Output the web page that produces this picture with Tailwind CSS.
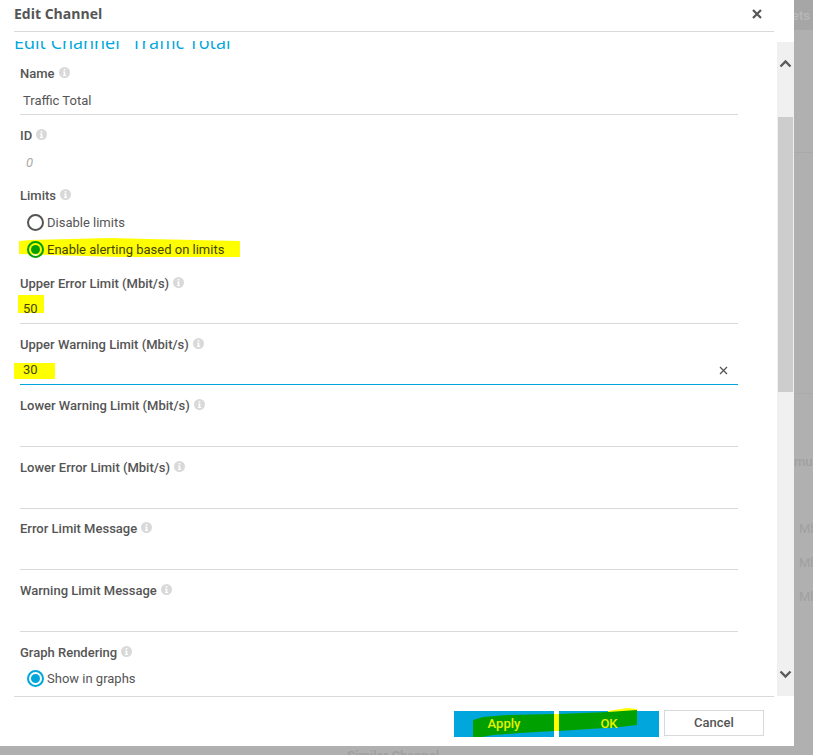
<!DOCTYPE html>
<html lang="en">
<head>
<meta charset="UTF-8">
<title>Edit Channel</title>
<script src="https://cdn.jsdelivr.net/npm/@tailwindcss/browser@4"></script>
</head>
<body class="bg-[#b0b0b0] font-['Roboto',sans-serif]">
<div class="relative w-[813px] h-[755px] overflow-hidden">
  <!-- page behind the dialog -->
  <div class="absolute left-[794px] top-0 w-[19px] h-[30px] bg-[#a6a6a6] text-[13px] font-medium text-[#b8b8b8] leading-[32px] whitespace-nowrap overflow-hidden indent-[-2px]">ets</div>
  <div class="absolute left-[794px] top-[152px] w-[19px] h-px bg-[#a9a9a9]"></div>
  <div class="absolute left-[794px] top-[393px] w-[19px] h-px bg-[#aaaaaa]"></div>
  <div class="absolute left-[794px] top-[452px] text-[13px] font-medium text-[#a0a0a0] whitespace-nowrap">mur</div>
  <div class="absolute left-[799px] top-[519px] text-[13px] text-[#a0a0a0] whitespace-nowrap">Mb</div>
  <div class="absolute left-[799px] top-[553px] text-[13px] text-[#a0a0a0] whitespace-nowrap">Mb</div>
  <div class="absolute left-[799px] top-[587px] text-[13px] text-[#a0a0a0] whitespace-nowrap">Mb</div>
  <div class="absolute left-[347px] top-[746px] text-[13px] font-bold text-[#a0a0a0] whitespace-nowrap">Similar Channel</div>

  <!-- dialog -->
  <div class="relative w-[794px] h-[746px] bg-white flex flex-col">
    <div class="mx-[14px] w-[760px] h-[32px] pb-[4px] border-b border-[#d9d9d9] flex items-center justify-between pr-[11px] shrink-0">
      <span class="text-[14px] font-bold text-[#555555] font-['Open_Sans',sans-serif]">Edit Channel</span>
      <svg class="w-[12px] h-[12px]" viewBox="0 0 12 12"><path d="M2 2l8 8M10 2l-8 8" stroke="#555555" stroke-width="2.2" fill="none"/></svg>
    </div>

    <div class="flex h-[664px] shrink-0">
      <div class="w-[777px] h-[664px] overflow-hidden">
        <div class="mt-[9px] h-[8px] overflow-hidden pl-[14px]">
          <div class="-mt-[11px] text-[18px] leading-[24px] text-[#00a6dc] font-['Open_Sans',sans-serif] whitespace-nowrap">Edit Channel "Traffic Total"</div>
        </div>
        <div class="pl-[20px] w-[738px] text-[13px] text-[#555555]">
          <div class="mt-[16px] h-[18px] flex items-center gap-[4px] font-medium">Name<svg class="w-[11px] h-[11px] -mt-[4px]" viewBox="0 0 16 16"><circle cx="8" cy="8" r="8" fill="#d9d9d9"/><path d="M6.8 3h2.4v2.2H6.8zM6 6.6h3.2v5.2H10.400v1.400H5.800v-1.400h1v-3.800H6z" fill="#fff"/></svg></div>
          <div class="h-[32px] border-b border-[#d9d9d9] pl-[3px] pt-[4px] flex items-center">Traffic Total</div>

          <div class="mt-[12px] h-[18px] flex items-center gap-[4px] font-medium">ID<svg class="w-[11px] h-[11px] -mt-[4px]" viewBox="0 0 16 16"><circle cx="8" cy="8" r="8" fill="#d9d9d9"/><path d="M6.8 3h2.4v2.2H6.8zM6 6.6h3.2v5.2H10.400v1.400H5.800v-1.400h1v-3.800H6z" fill="#fff"/></svg></div>
          <div class="h-[32px] pl-[6px] pt-[3px] flex items-center italic text-[#aaaaaa]">0</div>

          <div class="mt-[10px] h-[18px] flex items-center gap-[4px] font-medium">Limits<svg class="w-[11px] h-[11px] -mt-[4px]" viewBox="0 0 16 16"><circle cx="8" cy="8" r="8" fill="#d9d9d9"/><path d="M6.8 3h2.4v2.2H6.8zM6 6.6h3.2v5.2H10.400v1.400H5.800v-1.400h1v-3.800H6z" fill="#fff"/></svg></div>
          <div class="relative mt-[8px] h-[27px] pl-[7px] flex items-start">
            <span class="w-[17px] h-[17px] mt-[1px] rounded-full border-2 border-[#555555]"></span>
            <span class="ml-[3px]">Disable limits</span>
          </div>
          <div class="relative h-[27px] pl-[7px] flex items-start">
            <svg class="absolute -left-[1px] -top-[2px] w-[222px] h-[20px]" viewBox="0 0 222 20"><polygon points="0,3 12,2 90,0 130,1 221,3 221,19 100,19 0,16" fill="#ffff00"/></svg>
            <span class="relative w-[17px] h-[17px] mt-[1px] rounded-full border-2 border-[#00a000] flex items-center justify-center"><span class="w-[9px] h-[9px] rounded-full bg-[#00a000]"></span></span>
            <span class="relative ml-[3px] text-[#444400]">Enable alerting based on limits</span>
          </div>

          <div class="mt-[8px] h-[18px] flex items-center gap-[4px] font-medium">Upper Error Limit (Mbit/s)<svg class="w-[11px] h-[11px] -mt-[4px]" viewBox="0 0 16 16"><circle cx="8" cy="8" r="8" fill="#d9d9d9"/><path d="M6.8 3h2.4v2.2H6.8zM6 6.6h3.2v5.2H10.400v1.400H5.800v-1.400h1v-3.800H6z" fill="#fff"/></svg></div>
          <div class="relative h-[31px] border-b border-[#d9d9d9] pl-[3px] pt-[6px]">
            <div class="absolute -left-[2px] top-[2px] w-[26px] h-[18px] bg-[#ffff00]"></div>
            <span class="relative text-[#444400]">50</span>
          </div>

          <div class="mt-[12px] h-[18px] flex items-center gap-[4px] font-medium">Upper Warning Limit (Mbit/s)<svg class="w-[11px] h-[11px] -mt-[4px]" viewBox="0 0 16 16"><circle cx="8" cy="8" r="8" fill="#d9d9d9"/><path d="M6.8 3h2.4v2.2H6.8zM6 6.6h3.2v5.2H10.400v1.400H5.800v-1.400h1v-3.800H6z" fill="#fff"/></svg></div>
          <div class="relative h-[31px] border-b border-b-[#00a6dc] pl-[3px] pt-[2px] flex items-center justify-between pr-[10px]">
            <div class="absolute -left-[6px] top-[9px] w-[41px] h-[16px] bg-[#ffff00]"></div>
            <span class="relative text-[#444400]">30</span>
            <svg class="w-[9px] h-[9px]" viewBox="0 0 9 9"><path d="M1 1l7 7M8 1l-7 7" stroke="#555555" stroke-width="1.300" fill="none"/></svg>
          </div>

          <div class="mt-[12px] h-[18px] flex items-center gap-[4px] font-medium">Lower Warning Limit (Mbit/s)<svg class="w-[11px] h-[11px] -mt-[4px]" viewBox="0 0 16 16"><circle cx="8" cy="8" r="8" fill="#d9d9d9"/><path d="M6.8 3h2.4v2.2H6.8zM6 6.6h3.2v5.2H10.400v1.400H5.800v-1.400h1v-3.800H6z" fill="#fff"/></svg></div>
          <div class="h-[32px] border-b border-[#d9d9d9]"></div>

          <div class="mt-[12px] h-[18px] flex items-center gap-[4px] font-medium">Lower Error Limit (Mbit/s)<svg class="w-[11px] h-[11px] -mt-[4px]" viewBox="0 0 16 16"><circle cx="8" cy="8" r="8" fill="#d9d9d9"/><path d="M6.8 3h2.4v2.2H6.8zM6 6.6h3.2v5.2H10.400v1.400H5.800v-1.400h1v-3.800H6z" fill="#fff"/></svg></div>
          <div class="h-[32px] border-b border-[#d9d9d9]"></div>

          <div class="mt-[11px] h-[18px] flex items-center gap-[4px] font-medium">Error Limit Message<svg class="w-[11px] h-[11px] -mt-[4px]" viewBox="0 0 16 16"><circle cx="8" cy="8" r="8" fill="#d9d9d9"/><path d="M6.8 3h2.4v2.2H6.8zM6 6.6h3.2v5.2H10.400v1.400H5.800v-1.400h1v-3.800H6z" fill="#fff"/></svg></div>
          <div class="h-[32px] border-b border-[#d9d9d9]"></div>

          <div class="mt-[12px] h-[18px] flex items-center gap-[4px] font-medium">Warning Limit Message<svg class="w-[11px] h-[11px] -mt-[4px]" viewBox="0 0 16 16"><circle cx="8" cy="8" r="8" fill="#d9d9d9"/><path d="M6.8 3h2.4v2.2H6.8zM6 6.6h3.2v5.2H10.400v1.400H5.800v-1.400h1v-3.800H6z" fill="#fff"/></svg></div>
          <div class="h-[32px] border-b border-[#d9d9d9]"></div>

          <div class="mt-[12px] h-[18px] flex items-center gap-[4px] font-medium">Graph Rendering<svg class="w-[11px] h-[11px] -mt-[4px]" viewBox="0 0 16 16"><circle cx="8" cy="8" r="8" fill="#d9d9d9"/><path d="M6.8 3h2.4v2.2H6.8zM6 6.6h3.2v5.2H10.400v1.400H5.800v-1.400h1v-3.800H6z" fill="#fff"/></svg></div>
          <div class="mt-[7px] h-[20px] pl-[7px] flex items-start">
            <span class="w-[17px] h-[17px] mt-[1px] rounded-full border-2 border-[#00a6dc] flex items-center justify-center"><span class="w-[9px] h-[9px] rounded-full bg-[#00a6dc]"></span></span>
            <span class="ml-[3px]">Show in graphs</span>
          </div>
        </div>
      </div>
      <!-- scrollbar -->
      <div class="w-[17px] mt-[10px] h-[654px] bg-[#f0f0f0] flex flex-col">
        <div class="h-[42px] mb-[33px] flex items-center justify-center"><svg class="w-[13px] h-[9px]" viewBox="0 0 13 9"><path d="M1.500 7.500l5-5 5 5" stroke="#5a5a5a" stroke-width="2.400" fill="none"/></svg></div>
        <div class="ml-px w-[15px] h-[275px] bg-[#cdcdcd]"></div>
        <div class="mt-auto h-[38px] flex items-start justify-center pt-[12px]"><svg class="w-[13px] h-[9px]" viewBox="0 0 13 9"><path d="M1.500 1.500l5 5 5-5" stroke="#5a5a5a" stroke-width="2.400" fill="none"/></svg></div>
      </div>
    </div>

    <div class="ml-[14px] w-[760px] border-t border-[#d9d9d9] h-[50px] shrink-0"></div>
    <div class="absolute left-[454px] top-[710px] flex gap-[5px]">
      <button class="relative w-[100px] h-[26px] mt-px bg-[#00a6dc] text-[13px] font-medium text-[#e6f000]"><span class="relative z-10">Apply</span></button>
      <button class="relative w-[100px] h-[26px] mt-px bg-[#00a6dc] text-[13px] font-medium text-[#e6f000]"><span class="relative z-10">OK</span></button>
      <button class="w-[100px] h-[26px] bg-white border border-[#d9d9d9] text-[13px] font-medium text-[#555555]">Cancel</button>
      <!-- highlighter marks over the buttons, in page coordinates -->
      <svg class="absolute left-0 -top-[10px] w-[205px] h-[40px]" viewBox="454 700 205 40">
        <rect x="554" y="714" width="5" height="17" fill="#ffff00"/>
        <polygon points="608,711 627,708 637,709 637,712 608,713" fill="#ffff00"/>
        <polygon points="473,720 483,717 507,715 554,714 554,731 520,733 493,735 482,737 473,737" fill="#00a000"/>
        <polygon points="559,714 608,712 637,710 637,725 620,727 559,731" fill="#00a000"/>
      </svg>
    </div>
  </div>
</div>
</body>
</html>
